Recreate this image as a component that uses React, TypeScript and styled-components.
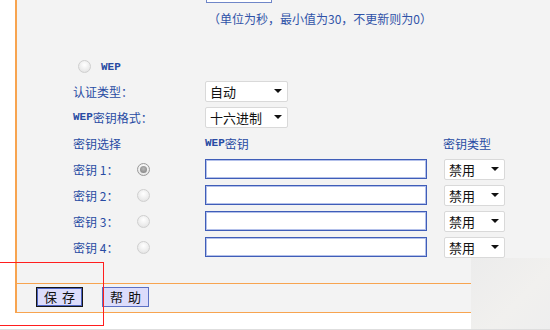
import React from "react";
import styled, { createGlobalStyle } from "styled-components";

const GlobalStyle = createGlobalStyle`
  html, body {
    margin: 0;
    padding: 0;
    background: #ffffff;
    overflow: hidden;
  }
  body {
    font-family: "Noto Sans CJK SC", "Liberation Sans", sans-serif;
    font-size: 12px;
  }
`;

const Page = styled.div`
  position: relative;
  width: 550px;
  height: 330px;
  overflow: hidden;
  background: #ffffff;
  border-bottom: 1px solid #dedede;
  box-sizing: border-box;
`;

const Panel = styled.div`
  margin-left: 15px;
  border-left: 2px solid #f7a450;
  background: #f3f3f3;
`;

const Content = styled.div`
  display: flex;
  flex-direction: column;
  padding: 0 0 23px 56px;
`;

const Row = styled.div<{ $h: number; $top?: number }>`
  display: grid;
  grid-template-columns: 132px 238px 1fr;
  align-items: center;
  height: ${(p) => p.$h}px;
  margin-top: ${(p) => p.$top || 0}px;
`;

const Fragment = styled.div`
  grid-column: 2;
  align-self: start;
  margin-left: 1px;
  width: 66px;
  height: 3px;
  box-sizing: border-box;
  background: #fff;
  border: 1px solid #6f86c8;
  border-top: none;
`;

const Hint = styled.div`
  grid-column: 2 / span 2;
  padding-left: 3px;
  color: #2f52a8;
  font-size: 12px;
  line-height: 14px;
  padding-top: 4px;
  white-space: nowrap;
`;

const Label = styled.div`
  display: flex;
  align-items: center;
  color: #284ba3;
  font-size: 12px;
  white-space: nowrap;
`;

const Latin = styled.span`
  font-family: "Liberation Mono", monospace;
  font-weight: bold;
  font-size: 11px;
`;

const KeyName = styled.span`
  width: 64px;
`;

const Radio = styled.span<{ $on?: boolean }>`
  position: relative;
  display: inline-block;
  width: 13px;
  height: 13px;
  box-sizing: border-box;
  border-radius: 50%;
  border: 1px solid ${(p) => (p.$on ? "#9a9a9a" : "#cfcfcf")};
  background: radial-gradient(circle at 50% 35%, #ffffff 0%, #ececec 60%, #dcdcdc 100%);
  &::after {
    content: "";
    display: ${(p) => (p.$on ? "block" : "none")};
    position: absolute;
    left: 2px;
    top: 2px;
    width: 7px;
    height: 7px;
    border-radius: 50%;
    background: radial-gradient(circle at 50% 40%, #b8b8b8, #7c7c7c);
  }
`;

const WepOption = styled(Label)`
  padding-left: 5px;
  gap: 10px;
`;

const Select = styled.div<{ $w: number }>`
  display: flex;
  align-items: center;
  justify-content: space-between;
  width: ${(p) => p.$w}px;
  height: 21px;
  box-sizing: border-box;
  padding: 0 5px 0 4px;
  background: #ffffff;
  border: 1px solid #d9d9d9;
  border-radius: 2px;
  color: #111;
  font-size: 13px;
  &::after {
    content: "";
    border-left: 4px solid transparent;
    border-right: 4px solid transparent;
    border-top: 4px solid #111;
  }
`;

const TextInput = styled.input`
  width: 222px;
  height: 20px;
  box-sizing: border-box;
  margin: 0;
  border: 1px solid #3f5db8;
  box-shadow: inset 0 0 0 1px #b3c0ea;
  background: #ffffff;
  outline: none;
`;

const TypeCell = styled.div`
  padding-left: 1px;
`;

const ButtonBar = styled.div`
  display: flex;
  gap: 19px;
  height: 30px;
  box-sizing: border-box;
  padding: 3px 0 0 19px;
  border-top: 1px solid #f7a450;
  border-bottom: 1px solid #f7a450;
`;

const Button = styled.button<{ $focus?: boolean }>`
  width: 47px;
  height: 20px;
  box-sizing: border-box;
  padding: 0;
  border: 1px solid ${(p) => (p.$focus ? "#151515" : "#5a70c4")};
  box-shadow: ${(p) => (p.$focus ? "inset 0 0 0 1px #4d63c2" : "none")};
  background: #dcdcfb;
  color: #111;
  font-family: "Noto Sans CJK SC", sans-serif;
  font-size: 13px;
  line-height: 16px;
  letter-spacing: 5px;
  text-indent: 5px;
`;

const Mark = styled.div`
  position: absolute;
  left: -2px;
  top: 262px;
  width: 106px;
  height: 64px;
  box-sizing: border-box;
  border: 1px solid #ff1e1e;
  pointer-events: none;
`;

const Shade = styled.div`
  position: absolute;
  left: 471px;
  top: 258px;
  right: 0;
  bottom: 0;
  background: linear-gradient(135deg, #ececec, #f1f0ee 60%, #eeeeee);
`;

const keys = [1, 2, 3, 4];

export default function App() {
  return (
    <>
      <GlobalStyle />
      <Page>
        <Panel>
          <Content>
            <Row $h={3}>
              <Fragment />
            </Row>
            <Row $h={28}>
              <Hint>（单位为秒，最小值为30，不更新则为0）</Hint>
            </Row>
            <Row $h={23} $top={24}>
              <WepOption>
                <Radio />
                <Latin>WEP</Latin>
              </WepOption>
            </Row>
            <Row $h={26}>
              <Label>认证类型：</Label>
              <Select $w={83}>自动</Select>
            </Row>
            <Row $h={26}>
              <Label>
                <Latin>WEP</Latin>密钥格式：
              </Label>
              <Select $w={83}>十六进制</Select>
            </Row>
            <Row $h={26}>
              <Label>密钥选择</Label>
              <Label>
                <Latin>WEP</Latin>密钥
              </Label>
              <Label>密钥类型</Label>
            </Row>
            {keys.map((k) => (
              <Row $h={26} key={k}>
                <Label>
                  <KeyName>密钥 {k}：</KeyName>
                  <Radio $on={k === 1} />
                </Label>
                <TextInput type="text" />
                <TypeCell>
                  <Select $w={61}>禁用</Select>
                </TypeCell>
              </Row>
            ))}
          </Content>
          <ButtonBar>
            <Button $focus>保存</Button>
            <Button>帮助</Button>
          </ButtonBar>
        </Panel>
        <Shade />
        <Mark />
      </Page>
    </>
  );
}
